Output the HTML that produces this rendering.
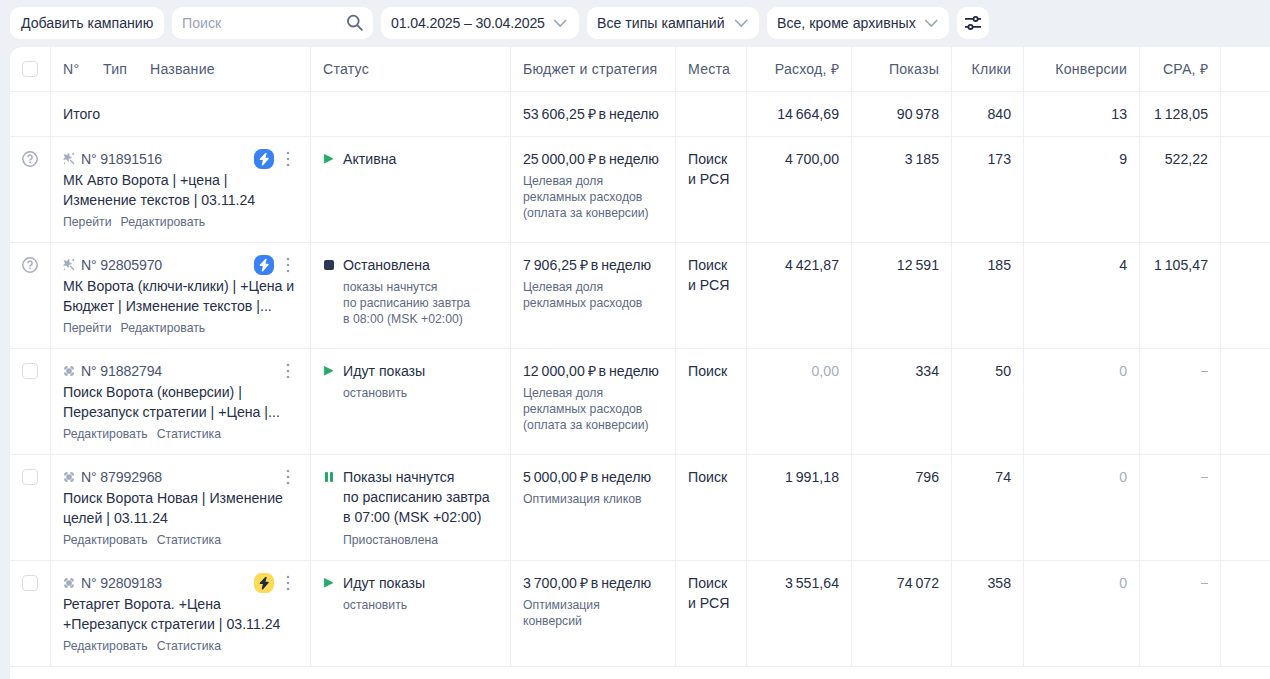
<!DOCTYPE html><html><head><meta charset="utf-8"><style>
*{margin:0;padding:0;box-sizing:border-box}
html,body{width:1270px;height:679px;overflow:hidden;background:#edf1f6;font-family:"Liberation Sans",sans-serif;color:#263049}
.a{position:absolute;white-space:nowrap}
.t14{font-size:14.15px;line-height:20px}
.t12{font-size:12.25px;line-height:16px}
.btn{position:absolute;top:7px;height:32px;background:#fff;border-radius:10px}
.tbl{position:absolute;left:10px;top:47px;width:1300px;height:700px;background:#fff;border-top-left-radius:12px}
.hl{position:absolute;left:10px;width:1260px;height:1px;background:#ebeef4}
.vl{position:absolute;top:47px;width:1px;height:620px;background:#ebeef4}
.hd{color:#4f5b75}
.sub{color:#5e6a84}
.lnk{color:#5e6a84}
.dis{color:#a6afc0}
.r{text-align:right}
.cb{position:absolute;left:22px;width:16px;height:16px;border:1.3px solid #d8dde7;border-radius:4px;background:#fff}
</style></head><body><div class="btn" style="left:10px;width:154px"></div>
<div class="a t14" style="left:21px;top:13px;">Добавить кампанию</div>
<div class="btn" style="left:172px;width:201px"></div>
<div class="a t14" style="left:182px;top:13px;color:#9aa4b8">Поиск</div>
<svg class="a" style="left:343px;top:11px" width="22" height="22" viewBox="0 0 22 22"><circle cx="10.3" cy="10.1" r="5.4" fill="none" stroke="#5b6b8c" stroke-width="1.8"/><path d="M14.2 14.1l4.6 4.7" stroke="#5b6b8c" stroke-width="1.9" stroke-linecap="round"/></svg>
<div class="btn" style="left:381px;width:198px"></div>
<div class="a t14" style="left:391px;top:13px;letter-spacing:-0.15px">01.04.2025 – 30.04.2025</div>
<svg class="a" style="left:552px;top:17px" width="16" height="12" viewBox="0 0 16 12"><path d="M2.2 3l6 6 6-6" fill="none" stroke="#9ca6ba" stroke-width="1.7"/></svg>
<div class="btn" style="left:587px;width:172px"></div>
<div class="a t14" style="left:597px;top:13px;">Все типы кампаний</div>
<svg class="a" style="left:733px;top:17px" width="16" height="12" viewBox="0 0 16 12"><path d="M2.2 3l6 6 6-6" fill="none" stroke="#9ca6ba" stroke-width="1.7"/></svg>
<div class="btn" style="left:767px;width:182px"></div>
<div class="a t14" style="left:777px;top:13px;">Все, кроме архивных</div>
<svg class="a" style="left:923px;top:17px" width="16" height="12" viewBox="0 0 16 12"><path d="M2.2 3l6 6 6-6" fill="none" stroke="#9ca6ba" stroke-width="1.7"/></svg>
<div class="btn" style="left:957px;width:32px"></div>
<svg class="a" style="left:963px;top:12px" width="22" height="22" viewBox="0 0 22 22"><g stroke="#1f2a44" stroke-width="1.8" fill="none"><path d="M2 6.9h8.6M14.9 6.9H18"/><circle cx="12.6" cy="6.9" r="2.1"/><path d="M2 14.9h3.4M9.7 14.9H18"/><circle cx="7.5" cy="14.9" r="2.1"/></g></svg>
<div class="tbl"></div>
<div class="hl" style="top:91px"></div>
<div class="hl" style="top:136px"></div>
<div class="hl" style="top:242px"></div>
<div class="hl" style="top:348px"></div>
<div class="hl" style="top:454px"></div>
<div class="hl" style="top:560px"></div>
<div class="hl" style="top:666px"></div>
<div class="vl" style="left:50px"></div>
<div class="vl" style="left:310px"></div>
<div class="vl" style="left:510px"></div>
<div class="vl" style="left:675px"></div>
<div class="vl" style="left:746px"></div>
<div class="vl" style="left:851px"></div>
<div class="vl" style="left:951px"></div>
<div class="vl" style="left:1023px"></div>
<div class="vl" style="left:1139px"></div>
<div class="vl" style="left:1220px"></div>
<div class="cb" style="top:61px"></div>
<div class="a t14" style="left:63px;top:59px;color:#4f5b75;letter-spacing:0.2px">N°</div>
<div class="a t14" style="left:103px;top:59px;color:#4f5b75;letter-spacing:0.2px">Тип</div>
<div class="a t14" style="left:150px;top:59px;color:#4f5b75;letter-spacing:0.2px">Название</div>
<div class="a t14" style="left:323px;top:59px;color:#4f5b75;letter-spacing:0.2px">Статус</div>
<div class="a t14" style="left:523px;top:59px;color:#4f5b75;letter-spacing:0.2px">Бюджет и стратегия</div>
<div class="a t14" style="left:688px;top:59px;color:#4f5b75;letter-spacing:0.2px">Места</div>
<div class="a t14 r" style="right:431px;top:59px;color:#4f5b75;letter-spacing:0.2px">Расход, ₽</div>
<div class="a t14 r" style="right:331px;top:59px;color:#4f5b75;letter-spacing:0.2px">Показы</div>
<div class="a t14 r" style="right:259px;top:59px;color:#4f5b75;letter-spacing:0.2px">Клики</div>
<div class="a t14 r" style="right:143px;top:59px;color:#4f5b75;letter-spacing:0.2px">Конверсии</div>
<div class="a t14 r" style="right:62px;top:59px;color:#4f5b75;letter-spacing:0.2px">CPA, ₽</div>
<div class="a t14" style="left:63px;top:104px;">Итого</div>
<div class="a t14" style="left:523px;top:104px;">53 606,25 ₽<span style="word-spacing:-1px"> в неделю</span></div>
<div class="a t14 r" style="right:431px;top:104px;">14 664,69</div>
<div class="a t14 r" style="right:331px;top:104px;">90 978</div>
<div class="a t14 r" style="right:259px;top:104px;">840</div>
<div class="a t14 r" style="right:143px;top:104px;">13</div>
<div class="a t14 r" style="right:62px;top:104px;">1 128,05</div>
<svg class="a" style="left:21px;top:150px" width="18" height="18" viewBox="0 0 18 18"><circle cx="9" cy="9" r="7.2" fill="none" stroke="#a3adc2" stroke-width="1.5"/><path d="M6.9 7.2a2.1 2.1 0 1 1 3.2 1.8c-.7.4-1.1.8-1.1 1.6" fill="none" stroke="#a3adc2" stroke-width="1.5"/><rect x="8.2" y="11.6" width="1.6" height="1.6" fill="#a3adc2"/></svg>
<svg class="a" style="left:62px;top:152px" width="14" height="14" viewBox="0 0 14 14"><path d="M9.68 5.68 L6.81 6.61 L6.29 9.59 L4.52 7.14 L1.53 7.57 L3.31 5.13 L1.98 2.41 L4.85 3.35 L7.02 1.25 L7.01 4.27Z" fill="#a3adc2" stroke="#a3adc2" stroke-width="0.6" stroke-linejoin="round"/><path d="M8.6 8.6l3 3" stroke="#a3adc2" stroke-width="1.4" stroke-linecap="round"/><circle cx="11.2" cy="2" r="1" fill="#a3adc2"/><circle cx="2.5" cy="11.2" r="0.7" fill="#a3adc2"/></svg>
<div class="a t14" style="left:81px;top:149px;color:#4a5670;letter-spacing:-0.15px">N° 91891516</div>
<div class="a" style="left:254px;top:149px;width:20px;height:20px;border-radius:7.5px;background:#3a80f7"><svg width="20" height="20" viewBox="0 0 20 20" style="position:absolute;left:0;top:0"><path d="M11.9 4.4L6.4 10.3H9.9L8.5 15.7L14 9.6H10.5Z" fill="#fff" stroke="#fff" stroke-width="1.5" stroke-linejoin="round"/></svg></div>
<svg class="a" style="left:286px;top:150px" width="4" height="18" viewBox="0 0 4 18"><circle cx="2" cy="3" r="1.35" fill="#939db2"/><circle cx="2" cy="9" r="1.35" fill="#939db2"/><circle cx="2" cy="15" r="1.35" fill="#939db2"/></svg>
<div class="a t14" style="left:63px;top:170px;">МК Авто Ворота | +цена |</div>
<div class="a t14" style="left:63px;top:190px;">Изменение текстов | 03.11.24</div>
<div class="a t12 lnk" style="left:63px;top:214px">Перейти<span style="margin-left:9px">Редактировать</span></div>
<svg class="a" style="left:323px;top:153px" width="12" height="12" viewBox="0 0 12 12"><path d="M1.3 1.5L9.9 5.8 1.3 10.1z" fill="#26a86b" stroke="#26a86b" stroke-width="0.8" stroke-linejoin="round"/></svg>
<div class="a t14" style="left:343px;top:149px;">Активна</div>
<div class="a t14" style="left:523px;top:149px;">25 000,00 ₽<span style="word-spacing:-1px"> в неделю</span></div>
<div class="a t12" style="left:523px;top:173px;color:#5e6a84">Целевая доля</div>
<div class="a t12" style="left:523px;top:189px;color:#5e6a84">рекламных расходов</div>
<div class="a t12" style="left:523px;top:205px;color:#5e6a84">(оплата за конверсии)</div>
<div class="a t14" style="left:688px;top:149px;">Поиск</div>
<div class="a t14" style="left:688px;top:169px;">и РСЯ</div>
<div class="a t14 r" style="right:431px;top:149px;">4 700,00</div>
<div class="a t14 r" style="right:331px;top:149px;">3 185</div>
<div class="a t14 r" style="right:259px;top:149px;">173</div>
<div class="a t14 r" style="right:143px;top:149px;">9</div>
<div class="a t14 r" style="right:62px;top:149px;">522,22</div>
<svg class="a" style="left:21px;top:256px" width="18" height="18" viewBox="0 0 18 18"><circle cx="9" cy="9" r="7.2" fill="none" stroke="#a3adc2" stroke-width="1.5"/><path d="M6.9 7.2a2.1 2.1 0 1 1 3.2 1.8c-.7.4-1.1.8-1.1 1.6" fill="none" stroke="#a3adc2" stroke-width="1.5"/><rect x="8.2" y="11.6" width="1.6" height="1.6" fill="#a3adc2"/></svg>
<svg class="a" style="left:62px;top:258px" width="14" height="14" viewBox="0 0 14 14"><path d="M9.68 5.68 L6.81 6.61 L6.29 9.59 L4.52 7.14 L1.53 7.57 L3.31 5.13 L1.98 2.41 L4.85 3.35 L7.02 1.25 L7.01 4.27Z" fill="#a3adc2" stroke="#a3adc2" stroke-width="0.6" stroke-linejoin="round"/><path d="M8.6 8.6l3 3" stroke="#a3adc2" stroke-width="1.4" stroke-linecap="round"/><circle cx="11.2" cy="2" r="1" fill="#a3adc2"/><circle cx="2.5" cy="11.2" r="0.7" fill="#a3adc2"/></svg>
<div class="a t14" style="left:81px;top:255px;color:#4a5670;letter-spacing:-0.15px">N° 92805970</div>
<div class="a" style="left:254px;top:255px;width:20px;height:20px;border-radius:7.5px;background:#3a80f7"><svg width="20" height="20" viewBox="0 0 20 20" style="position:absolute;left:0;top:0"><path d="M11.9 4.4L6.4 10.3H9.9L8.5 15.7L14 9.6H10.5Z" fill="#fff" stroke="#fff" stroke-width="1.5" stroke-linejoin="round"/></svg></div>
<svg class="a" style="left:286px;top:256px" width="4" height="18" viewBox="0 0 4 18"><circle cx="2" cy="3" r="1.35" fill="#939db2"/><circle cx="2" cy="9" r="1.35" fill="#939db2"/><circle cx="2" cy="15" r="1.35" fill="#939db2"/></svg>
<div class="a t14" style="left:63px;top:276px;">МК Ворота (ключи-клики) | +Цена и</div>
<div class="a t14" style="left:63px;top:296px;">Бюджет | Изменение текстов |...</div>
<div class="a t12 lnk" style="left:63px;top:320px">Перейти<span style="margin-left:9px">Редактировать</span></div>
<div class="a" style="left:324px;top:260px;width:10px;height:10px;border-radius:2px;background:#2c3853"></div>
<div class="a t14" style="left:343px;top:255px;">Остановлена</div>
<div class="a t12" style="left:343px;top:279px;color:#5e6a84">показы начнутся</div>
<div class="a t12" style="left:343px;top:295px;color:#5e6a84">по расписанию завтра</div>
<div class="a t12" style="left:343px;top:311px;color:#5e6a84">в 08:00 (MSK +02:00)</div>
<div class="a t14" style="left:523px;top:255px;">7 906,25 ₽<span style="word-spacing:-1px"> в неделю</span></div>
<div class="a t12" style="left:523px;top:279px;color:#5e6a84">Целевая доля</div>
<div class="a t12" style="left:523px;top:295px;color:#5e6a84">рекламных расходов</div>
<div class="a t14" style="left:688px;top:255px;">Поиск</div>
<div class="a t14" style="left:688px;top:275px;">и РСЯ</div>
<div class="a t14 r" style="right:431px;top:255px;">4 421,87</div>
<div class="a t14 r" style="right:331px;top:255px;">12 591</div>
<div class="a t14 r" style="right:259px;top:255px;">185</div>
<div class="a t14 r" style="right:143px;top:255px;">4</div>
<div class="a t14 r" style="right:62px;top:255px;">1 105,47</div>
<div class="cb" style="top:363px"></div>
<svg class="a" style="left:63px;top:365px" width="12" height="12" viewBox="0 0 12 12"><circle cx="6" cy="6" r="2.85" fill="#a3adc2"/><g fill="none" stroke="#a3adc2" stroke-width="2.1"><path d="M2.1 4.6V4.3A2.2 2.2 0 0 1 4.3 2.1H4.6M7.4 2.1H7.7A2.2 2.2 0 0 1 9.9 4.3V4.6M9.9 7.4V7.7A2.2 2.2 0 0 1 7.7 9.9H7.4M4.6 9.9H4.3A2.2 2.2 0 0 1 2.1 7.7V7.4"/></g></svg>
<div class="a t14" style="left:81px;top:361px;color:#4a5670;letter-spacing:-0.15px">N° 91882794</div>
<svg class="a" style="left:286px;top:362px" width="4" height="18" viewBox="0 0 4 18"><circle cx="2" cy="3" r="1.35" fill="#939db2"/><circle cx="2" cy="9" r="1.35" fill="#939db2"/><circle cx="2" cy="15" r="1.35" fill="#939db2"/></svg>
<div class="a t14" style="left:63px;top:382px;">Поиск Ворота (конверсии) |</div>
<div class="a t14" style="left:63px;top:402px;">Перезапуск стратегии | +Цена |...</div>
<div class="a t12 lnk" style="left:63px;top:426px">Редактировать<span style="margin-left:9px">Статистика</span></div>
<svg class="a" style="left:323px;top:365px" width="12" height="12" viewBox="0 0 12 12"><path d="M1.3 1.5L9.9 5.8 1.3 10.1z" fill="#26a86b" stroke="#26a86b" stroke-width="0.8" stroke-linejoin="round"/></svg>
<div class="a t14" style="left:343px;top:361px;">Идут показы</div>
<div class="a t12" style="left:343px;top:385px;color:#5e6a84">остановить</div>
<div class="a t14" style="left:523px;top:361px;">12 000,00 ₽<span style="word-spacing:-1px"> в неделю</span></div>
<div class="a t12" style="left:523px;top:385px;color:#5e6a84">Целевая доля</div>
<div class="a t12" style="left:523px;top:401px;color:#5e6a84">рекламных расходов</div>
<div class="a t12" style="left:523px;top:417px;color:#5e6a84">(оплата за конверсии)</div>
<div class="a t14" style="left:688px;top:361px;">Поиск</div>
<div class="a t14 r" style="right:431px;top:361px;color:#a6afc0">0,00</div>
<div class="a t14 r" style="right:331px;top:361px;">334</div>
<div class="a t14 r" style="right:259px;top:361px;">50</div>
<div class="a t14 r" style="right:143px;top:361px;color:#a6afc0">0</div>
<div class="a" style="left:1201px;top:371px;width:7px;height:1.4px;background:#a6afc0"></div>
<div class="cb" style="top:469px"></div>
<svg class="a" style="left:63px;top:471px" width="12" height="12" viewBox="0 0 12 12"><circle cx="6" cy="6" r="2.85" fill="#a3adc2"/><g fill="none" stroke="#a3adc2" stroke-width="2.1"><path d="M2.1 4.6V4.3A2.2 2.2 0 0 1 4.3 2.1H4.6M7.4 2.1H7.7A2.2 2.2 0 0 1 9.9 4.3V4.6M9.9 7.4V7.7A2.2 2.2 0 0 1 7.7 9.9H7.4M4.6 9.9H4.3A2.2 2.2 0 0 1 2.1 7.7V7.4"/></g></svg>
<div class="a t14" style="left:81px;top:467px;color:#4a5670;letter-spacing:-0.15px">N° 87992968</div>
<svg class="a" style="left:286px;top:468px" width="4" height="18" viewBox="0 0 4 18"><circle cx="2" cy="3" r="1.35" fill="#939db2"/><circle cx="2" cy="9" r="1.35" fill="#939db2"/><circle cx="2" cy="15" r="1.35" fill="#939db2"/></svg>
<div class="a t14" style="left:63px;top:488px;">Поиск Ворота Новая | Изменение</div>
<div class="a t14" style="left:63px;top:508px;">целей | 03.11.24</div>
<div class="a t12 lnk" style="left:63px;top:532px">Редактировать<span style="margin-left:9px">Статистика</span></div>
<svg class="a" style="left:324px;top:472px" width="12" height="12" viewBox="0 0 12 12"><rect x="1" y="0" width="3" height="10" rx="1" fill="#26a86b"/><rect x="6" y="0" width="3" height="10" rx="1" fill="#26a86b"/></svg>
<div class="a t14" style="left:343px;top:467px;">Показы начнутся</div>
<div class="a t14" style="left:343px;top:487px;">по расписанию завтра</div>
<div class="a t14" style="left:343px;top:507px;">в 07:00 (MSK +02:00)</div>
<div class="a t12" style="left:343px;top:532px;color:#5e6a84">Приостановлена</div>
<div class="a t14" style="left:523px;top:467px;">5 000,00 ₽<span style="word-spacing:-1px"> в неделю</span></div>
<div class="a t12" style="left:523px;top:491px;color:#5e6a84">Оптимизация кликов</div>
<div class="a t14" style="left:688px;top:467px;">Поиск</div>
<div class="a t14 r" style="right:431px;top:467px;">1 991,18</div>
<div class="a t14 r" style="right:331px;top:467px;">796</div>
<div class="a t14 r" style="right:259px;top:467px;">74</div>
<div class="a t14 r" style="right:143px;top:467px;color:#a6afc0">0</div>
<div class="a" style="left:1201px;top:477px;width:7px;height:1.4px;background:#a6afc0"></div>
<div class="cb" style="top:575px"></div>
<svg class="a" style="left:63px;top:577px" width="12" height="12" viewBox="0 0 12 12"><circle cx="6" cy="6" r="2.85" fill="#a3adc2"/><g fill="none" stroke="#a3adc2" stroke-width="2.1"><path d="M2.1 4.6V4.3A2.2 2.2 0 0 1 4.3 2.1H4.6M7.4 2.1H7.7A2.2 2.2 0 0 1 9.9 4.3V4.6M9.9 7.4V7.7A2.2 2.2 0 0 1 7.7 9.9H7.4M4.6 9.9H4.3A2.2 2.2 0 0 1 2.1 7.7V7.4"/></g></svg>
<div class="a t14" style="left:81px;top:573px;color:#4a5670;letter-spacing:-0.15px">N° 92809183</div>
<div class="a" style="left:254px;top:573px;width:20px;height:20px;border-radius:7.5px;background:#fedb57"><svg width="20" height="20" viewBox="0 0 20 20" style="position:absolute;left:0;top:0"><path d="M11.9 4.4L6.4 10.3H9.9L8.5 15.7L14 9.6H10.5Z" fill="#1f2a44" stroke="#1f2a44" stroke-width="1.5" stroke-linejoin="round"/></svg></div>
<svg class="a" style="left:286px;top:574px" width="4" height="18" viewBox="0 0 4 18"><circle cx="2" cy="3" r="1.35" fill="#939db2"/><circle cx="2" cy="9" r="1.35" fill="#939db2"/><circle cx="2" cy="15" r="1.35" fill="#939db2"/></svg>
<div class="a t14" style="left:63px;top:594px;">Ретаргет Ворота. +Цена</div>
<div class="a t14" style="left:63px;top:614px;">+Перезапуск стратегии | 03.11.24</div>
<div class="a t12 lnk" style="left:63px;top:638px">Редактировать<span style="margin-left:9px">Статистика</span></div>
<svg class="a" style="left:323px;top:577px" width="12" height="12" viewBox="0 0 12 12"><path d="M1.3 1.5L9.9 5.8 1.3 10.1z" fill="#26a86b" stroke="#26a86b" stroke-width="0.8" stroke-linejoin="round"/></svg>
<div class="a t14" style="left:343px;top:573px;">Идут показы</div>
<div class="a t12" style="left:343px;top:597px;color:#5e6a84">остановить</div>
<div class="a t14" style="left:523px;top:573px;">3 700,00 ₽<span style="word-spacing:-1px"> в неделю</span></div>
<div class="a t12" style="left:523px;top:597px;color:#5e6a84">Оптимизация</div>
<div class="a t12" style="left:523px;top:613px;color:#5e6a84">конверсий</div>
<div class="a t14" style="left:688px;top:573px;">Поиск</div>
<div class="a t14" style="left:688px;top:593px;">и РСЯ</div>
<div class="a t14 r" style="right:431px;top:573px;">3 551,64</div>
<div class="a t14 r" style="right:331px;top:573px;">74 072</div>
<div class="a t14 r" style="right:259px;top:573px;">358</div>
<div class="a t14 r" style="right:143px;top:573px;color:#a6afc0">0</div>
<div class="a" style="left:1201px;top:583px;width:7px;height:1.4px;background:#a6afc0"></div></body></html>
